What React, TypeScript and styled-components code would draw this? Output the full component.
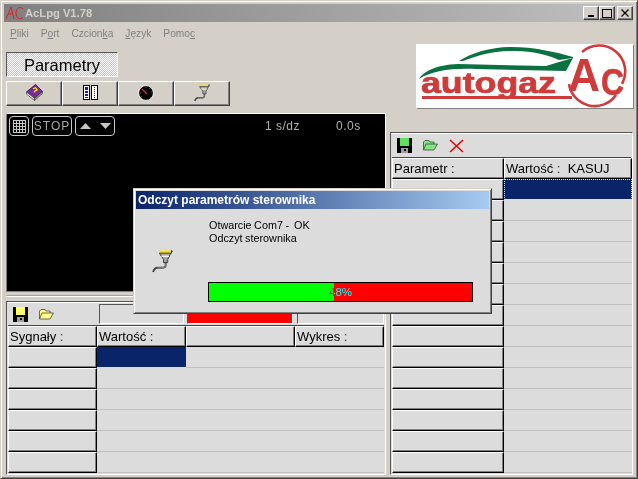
import React from 'react';
import styled, { createGlobalStyle } from 'styled-components';

const Global = createGlobalStyle`
  html, body { margin: 0; padding: 0; background: #d4d0c8; }
  body { font-family: "Liberation Sans", Arial, sans-serif; font-size: 11px; color: #000; overflow: hidden; }
`;

const Win = styled.div`
  position: relative;
  box-sizing: border-box;
  width: 638px;
  height: 479px;
  padding: 3px 4px 3px 3px;
  background: #d4d0c8;
  border: 1px solid;
  border-color: #d4d0c8 #404040 #404040 #d4d0c8;
  box-shadow: inset 1px 1px #fff, inset -1px -1px #808080;
  display: flex;
  flex-direction: column;
`;

const TitleBar = styled.div`
  height: 18px;
  flex: none;
  display: flex;
  align-items: center;
  padding-left: 2px;
  background: linear-gradient(90deg, #808080, #c0c0c0);
`;

const TitleText = styled.span`
  font: bold 11.2px "Liberation Sans", sans-serif;
  color: #d4d0c8;
  margin-left: 1px;
  flex: 1;
`;

const WinBtn = styled.button`
  box-sizing: border-box;
  width: 16px;
  height: 14px;
  padding: 0;
  margin: 0;
  background: #d4d0c8;
  border: 1px solid;
  border-color: #fff #404040 #404040 #fff;
  box-shadow: inset -1px -1px #808080;
  display: flex;
  align-items: center;
  justify-content: center;
  &.last { margin-left: 2px; }
`;

const MenuBar = styled.nav`
  height: 20px;
  flex: none;
  display: flex;
  align-items: center;
  padding: 1px 0 0 6px;
  gap: 12px;
  color: #808080;
  font-size: 10.2px;
  u { text-underline-offset: 1px; }
`;

const Main = styled.div`
  flex: 1;
  display: grid;
  grid-template-columns: 380px 243px;
  column-gap: 4px;
  padding-left: 2px;
  min-height: 0;
`;

const LeftCol = styled.div`
  display: flex;
  flex-direction: column;
  padding-top: 9px;
`;

const RightCol = styled.div`
  display: flex;
  flex-direction: column;
  padding-top: 1px;
`;

const TabBtn = styled.div`
  box-sizing: border-box;
  width: 112px;
  height: 25px;
  padding-top: 2px;
  display: flex;
  align-items: center;
  justify-content: center;
  font-size: 16.5px;
  border: 1px solid;
  border-color: #555 #fff #fff #555;
  background: repeating-conic-gradient(#c8c4bc 0 25%, #fff 0 50%) 0 0 / 2px 2px;
`;

const ToolRow = styled.div`
  display: flex;
  margin-top: 4px;
  height: 25px;
`;

const ToolBtn = styled.button`
  box-sizing: border-box;
  width: 56px;
  height: 25px;
  padding: 0 0 2px;
  background: #d4d0c8;
  border: 1px solid;
  border-color: #fff #404040 #404040 #fff;
  box-shadow: inset -1px -1px #808080;
  display: flex;
  align-items: center;
  justify-content: center;
`;

const Scope = styled.section`
  box-sizing: border-box;
  margin-top: 7px;
  width: 380px;
  height: 178px;
  background: #000;
  border-top: 1px solid #fff;
  border-right: 1px solid #fff;
  border-left: 1px solid #808080;
  display: flex;
  align-items: flex-start;
  padding: 2px 0 0 2px;
  color: #c8c8c8;
`;

const ScopeBtn = styled.div<{ $w: number; $ml?: number }>`
  box-sizing: border-box;
  width: ${p => p.$w}px;
  height: 20px;
  margin-left: ${p => p.$ml ?? 0}px;
  border: 1px solid #c8c8c8;
  border-radius: 4px;
  display: flex;
  align-items: center;
  justify-content: center;
  font-size: 12px;
  letter-spacing: 1px;
  color: #a8a8a8;
  gap: 9px;
`;

const ScopeReadout = styled.span<{ $ml: number }>`
  margin-left: ${p => p.$ml}px;
  margin-top: 3px;
  font-size: 12px;
  line-height: 15px;
  letter-spacing: 0.5px;
  color: #b0b0b0;
  white-space: nowrap;
`;

const Splitter = styled.div`
  height: 10px;
  flex: none;
  box-sizing: border-box;
  border-top: 1px solid #808080;
  background: linear-gradient(#d4d0c8 0 3px, #a8a49c 3px 4px, #fff 4px 5px, #d4d0c8 5px);
`;

const Panel = styled.section`
  box-sizing: border-box;
  flex: 1;
  display: flex;
  flex-direction: column;
  background: #dcdcdc;
  border: 1px solid;
  border-color: #555 #fff #fff #555;
  padding: 0 1px;
  min-height: 0;
`;

const PanelBar = styled.div<{ $h: number }>`
  box-sizing: border-box;
  flex: none;
  height: ${p => p.$h}px;
  display: flex;
  align-items: center;
  padding-left: 5px;
  gap: 11px;
  background: #dcdcdc;
  border-bottom: 1px solid #444;
  border-top: 1px solid #fff;
`;

const Field = styled.div<{ $w: number; $ml?: number; $red?: boolean }>`
  box-sizing: border-box;
  width: ${p => p.$w}px;
  height: 20px;
  margin-left: ${p => p.$ml ?? 0}px;
  border: 1px solid;
  border-color: #555 #fff #fff #555;
  background: ${p => (p.$red ? '#ff0000' : '#dcdcdc')};
`;

const Table = styled.div<{ $cols: string }>`
  display: grid;
  grid-template-columns: ${p => p.$cols};
  grid-auto-rows: 21px;
`;

const HeadCell = styled.div`
  box-sizing: border-box;
  display: flex;
  align-items: center;
  padding-left: 1px;
  font-size: 13px;
  white-space: nowrap;
  overflow: hidden;
  background: #dcdcdc;
  border-top: 1px solid #fff;
  border-left: 1px solid #fff;
  border-right: 1px solid #000;
  border-bottom: 1px solid #000;
  box-shadow: inset -1px -1px #808080;
`;

const FixedCell = styled.div`
  box-sizing: border-box;
  background: #dcdcdc;
  border-top: 1px solid #fff;
  border-left: 1px solid #fff;
  border-right: 1px solid #000;
  border-bottom: 1px solid #000;
  box-shadow: inset -1px -1px #808080;
`;

const DataCell = styled.div<{ $selected?: boolean; $dotted?: boolean }>`
  box-sizing: border-box;
  background: ${p => (p.$selected ? '#0a246a' : '#dcdcdc')};
  border-bottom: 1px solid ${p => (p.$selected ? '#dcdcdc' : '#c0c0c0')};
  outline: ${p => (p.$dotted ? '1px dotted #f0e8a0' : 'none')};
  outline-offset: -1px;
`;

const LogoBox = styled.div`
  box-sizing: border-box;
  width: 217px;
  height: 64px;
  margin-left: 26px;
  flex: none;
  background: #fff;
  box-shadow: 1px 1px 0 #808080;
`;

const RightPanel = styled(Panel)`
  margin-top: 24px;
`;

const Dialog = styled.div`
  position: absolute;
  left: 132px;
  top: 187px;
  box-sizing: border-box;
  width: 359px;
  height: 126px;
  padding: 2px;
  background: #dcdcdc;
  border: 1px solid;
  border-color: #d4d0c8 #404040 #404040 #d4d0c8;
  box-shadow: inset 1px 1px #fff, inset -1px -1px #808080;
  display: flex;
  flex-direction: column;
`;

const DialogTitle = styled.div`
  height: 18px;
  flex: none;
  display: flex;
  align-items: center;
  padding-left: 2px;
  font: bold 12px "Liberation Sans", sans-serif;
  color: #fff;
  background: linear-gradient(90deg, #0a246a, #a6caf0);
`;

const DialogBody = styled.div`
  flex: 1;
  display: grid;
  grid-template-columns: 72px 265px;
  grid-template-rows: auto 1fr;
  padding-top: 10px;
`;

const FunnelSlot = styled.div`
  grid-row: 1 / 3;
  padding: 31px 0 0 16px;
`;

const DialogText = styled.div`
  margin-left: 1px;
  font-size: 10.8px;
  line-height: 13px;
  word-spacing: -0.5px;
  color: #000;
`;

const Progress = styled.div`
  box-sizing: border-box;
  align-self: end;
  position: relative;
  width: 265px;
  height: 20px;
  margin-bottom: 9px;
  border: 1px solid #000;
  background: #ff0000;
`;

const ProgressFill = styled.div`
  height: 100%;
  background: #00ff00;
`;

const ProgressLabel = styled.span`
  position: absolute;
  inset: 0;
  display: flex;
  align-items: center;
  justify-content: center;
  font-size: 11.5px;
  color: #fff;
  mix-blend-mode: difference;
`;

const Funnel = ({ size }: { size: number }) => (
  <svg width={size} height={size + 2} viewBox="0 0 20 22">
    <rect x="7" y="0.5" width="11" height="2.5" fill="#ffe800" />
    <path d="M18 0l2 1-2 3z" fill="#333" />
    <path d="M7 3h11l-3 6v3h-4V9z" fill="#a8a8a8" stroke="#333" strokeWidth="0.9" />
    <path d="M9 6h7" stroke="#fff" strokeWidth="1.2" />
    <path d="M13 12v3c0 2-2 2-4 2H5c-2 0-3 1-4 4" fill="none" stroke="#444" strokeWidth="1.8" />
    <path d="M13 13v2c0 2-2 2-4 2H5" fill="none" stroke="#b0b0b0" strokeWidth="0.6" />
  </svg>
);

const Book = () => (
  <svg width="17" height="17" viewBox="0 0 16 16">
    <path d="M0.5 7.5 9 .5l6.5 6.5-7.5 6.5z" fill="#7a2aa0" stroke="#2a0c3c" strokeWidth="0.8" />
    <path d="M0.5 7.5 8 13.5v2L0.5 9.5z" fill="#f0f0f0" stroke="#333" strokeWidth="0.6" />
    <path d="M8 13.5l7.5-6.5v2L8 15.5z" fill="#9a9a9a" stroke="#333" strokeWidth="0.6" />
    <path d="M6.5 4.5l2.5-1 1.5 2-2.5 1.5v1" fill="none" stroke="#ffe800" strokeWidth="1.2" />
  </svg>
);

const Columns = () => (
  <svg width="15" height="15" viewBox="0 0 15 15" shapeRendering="crispEdges">
    <rect x="0.5" y="0.5" width="6" height="14" fill="#fff" stroke="#000" />
    <rect x="8.5" y="0.5" width="6" height="14" fill="#fff" stroke="#000" />
    <rect x="2" y="2" width="3" height="11" fill="#1818c0" />
    <path d="M2 5h3M2 8h3M2 11h3" stroke="#fff" />
    <path d="M11.5 2v11" stroke="#1818c0" strokeDasharray="1 1" />
  </svg>
);

const Gauge = () => (
  <svg width="16" height="16" viewBox="0 0 16 16">
    <circle cx="8" cy="8" r="7.4" fill="#000" stroke="#fff" strokeWidth="0.9" />
    <path d="M4 4l5 5" stroke="#e03030" strokeWidth="1.2" />
    <path d="M8 2v1M13 7h1M12 12l1 1M3 12l1-1M2 8h1M11 3l1 1" stroke="#c02020" strokeWidth="1" />
  </svg>
);

const Floppy = ({ color }: { color: string }) => (
  <svg width="15" height="15" viewBox="0 0 15 15" shapeRendering="crispEdges">
    <path d="M0 0h14l1 1v14H0z" fill="#000" />
    <rect x="3" y="0" width="9" height="8" fill={color} />
    <rect x="4" y="10" width="7" height="5" fill="#a0a0a0" />
    <rect x="7" y="11" width="2" height="2" fill="#000" />
  </svg>
);

const Folder = ({ color }: { color: string }) => (
  <svg width="15" height="11" viewBox="0 0 15 11">
    <path d="M0.5 10V2L2 .5h4L7 2h4v2" fill={color} stroke="#444" strokeWidth="0.8" />
    <path d="M0.5 10 3 4h11.5L11 10z" fill={color} stroke="#444" strokeWidth="0.8" />
  </svg>
);

const RedX = () => (
  <svg width="15" height="14" viewBox="0 0 15 14">
    <path d="M1 1l13 12M14 1 1 13" stroke="#f00000" strokeWidth="1.6" />
  </svg>
);

const GridIcon = () => (
  <svg width="13" height="13" viewBox="0 0 13 13" shapeRendering="crispEdges">
    <path d="M0 .5h13M0 3.5h13M0 6.5h13M0 9.5h13M0 12.5h13M.5 0v13M3.5 0v13M6.5 0v13M9.5 0v13M12.5 0v13" stroke="#c8c8c8" />
  </svg>
);

const Arrow = ({ down }: { down?: boolean }) => (
  <svg width="11" height="6" viewBox="0 0 11 6">
    <path d={down ? 'M0 0h11L5.5 6z' : 'M0 6h11L5.5 0z'} fill="#c8c8c8" />
  </svg>
);

const AppIcon = () => (
  <svg width="18" height="14" viewBox="0 0 18 14" style={{ flex: 'none' }}>
    <path d="M0 13 5 1l3 12M2 8h5" fill="none" stroke="#e02020" strokeWidth="1" />
    <path d="M17 3c-2-3-7-2-7 4s5 7 7 4" fill="none" stroke="#e02020" strokeWidth="1" />
  </svg>
);

const Logo = () => (
  <svg width="217" height="64" viewBox="0 0 217 64">
    <path
      d="M3 35C8 27 20 21 42 20L130 22 143 18 157 14 150 27 60 25C35 24 15 27 3 35z"
      fill="#0b7140"
    />
    <path
      d="M43 17C55 9 75 3 95 3 118 3 140 8 157 13L157 14 143 16C125 8 110 7 95 7 75 7 60 12 47 17z"
      fill="#0b7140"
    />
    <text
      x="5"
      y="49"
      fontFamily="Liberation Sans, sans-serif"
      fontWeight="700"
      fontSize="30"
      fill="#cf3a3a"
      stroke="#cf3a3a"
      strokeWidth="0.7"
      textLength="135"
      lengthAdjust="spacingAndGlyphs"
    >
      autogaz
    </text>
    <rect x="6" y="52" width="150" height="3" fill="#cf3a3a" />
    <path d="M166 8A26 26 0 0 1 206 40" fill="none" stroke="#cf3a3a" strokeWidth="2.6" />
    <path d="M153 40A26 26 0 0 0 200 51" fill="none" stroke="#cf3a3a" strokeWidth="2.6" />
    <text
      x="152"
      y="47"
      fontFamily="Liberation Sans, sans-serif"
      fontWeight="700"
      fontSize="46"
      fill="#cf3a3a"
      textLength="32"
      lengthAdjust="spacingAndGlyphs"
    >
      A
    </text>
    <text
      x="185"
      y="51"
      fontFamily="Liberation Sans, sans-serif"
      fontWeight="700"
      fontSize="37"
      fill="#cf3a3a"
      stroke="#cf3a3a"
      strokeWidth="0.6"
      textLength="23"
      lengthAdjust="spacingAndGlyphs"
    >
      C
    </text>
  </svg>
);

const leftRows = Array.from({ length: 6 }, (_, i) => i);
const rightRows = Array.from({ length: 14 }, (_, i) => i);
const progressPx = 125;

export default function App() {
  return (
    <>
      <Global />
      <Win>
        <TitleBar>
          <AppIcon />
          <TitleText>AcLpg V1.78</TitleText>
          <WinBtn>
            <svg width="8" height="8" viewBox="0 0 8 8" shapeRendering="crispEdges"><rect x="1" y="6" width="6" height="2" /></svg>
          </WinBtn>
          <WinBtn>
            <svg width="10" height="10" viewBox="0 0 10 10" shapeRendering="crispEdges"><path d="M.5 1.5h9v8h-9z" fill="none" stroke="#000" /><path d="M0 1.5h10" stroke="#000" /></svg>
          </WinBtn>
          <WinBtn className="last">
            <svg width="8" height="8" viewBox="0 0 8 8"><path d="M.5.5l7 7M7.5.5l-7 7" stroke="#000" strokeWidth="1.3" /></svg>
          </WinBtn>
        </TitleBar>
        <MenuBar>
          <span><u>P</u>liki</span>
          <span>P<u>o</u>rt</span>
          <span>Czcion<u>k</u>a</span>
          <span><u>J</u>ęzyk</span>
          <span>Pomo<u>c</u></span>
        </MenuBar>
        <Main>
          <LeftCol>
            <TabBtn>Parametry</TabBtn>
            <ToolRow>
              <ToolBtn><Book /></ToolBtn>
              <ToolBtn><Columns /></ToolBtn>
              <ToolBtn><Gauge /></ToolBtn>
              <ToolBtn><Funnel size={16} /></ToolBtn>
            </ToolRow>
            <Scope>
              <ScopeBtn $w={20}><GridIcon /></ScopeBtn>
              <ScopeBtn $w={40} $ml={3}>STOP</ScopeBtn>
              <ScopeBtn $w={40} $ml={3}><Arrow /><Arrow down /></ScopeBtn>
              <ScopeReadout $ml={150}>1 s/dz</ScopeReadout>
              <ScopeReadout $ml={36}>0.0s</ScopeReadout>
            </Scope>
            <Splitter />
            <Panel>
              <PanelBar $h={24}>
                <Floppy color="#ffff66" />
                <Folder color="#ffff88" />
                <Field $w={85} $ml={34} />
                <Field $w={106} $ml={-8} $red />
                <Field $w={87} $ml={-7} />
              </PanelBar>
              <Table $cols="89px 89px 109px 89px">
                <HeadCell>Sygnały :</HeadCell>
                <HeadCell>Wartość :</HeadCell>
                <HeadCell />
                <HeadCell>Wykres :</HeadCell>
                {leftRows.map(i => (
                  <React.Fragment key={i}>
                    <FixedCell />
                    <DataCell $selected={i === 0} />
                    <DataCell />
                    <DataCell />
                  </React.Fragment>
                ))}
              </Table>
            </Panel>
          </LeftCol>
          <RightCol>
            <LogoBox><Logo /></LogoBox>
            <RightPanel>
              <PanelBar $h={25}>
                <Floppy color="#60e060" />
                <Folder color="#80e880" />
                <RedX />
              </PanelBar>
              <Table $cols="112px 128px">
                <HeadCell>Parametr :</HeadCell>
                <HeadCell>Wartość :&nbsp;&nbsp;KASUJ</HeadCell>
                {rightRows.map(i => (
                  <React.Fragment key={i}>
                    <FixedCell />
                    <DataCell $selected={i === 0} $dotted={i === 0} />
                  </React.Fragment>
                ))}
              </Table>
            </RightPanel>
          </RightCol>
        </Main>
        <Dialog>
          <DialogTitle>Odczyt parametrów sterownika</DialogTitle>
          <DialogBody>
            <FunnelSlot><Funnel size={21} /></FunnelSlot>
            <DialogText>
              Otwarcie Com7 -&nbsp;&nbsp;OK<br />
              Odczyt sterownika
            </DialogText>
            <Progress>
              <ProgressFill style={{ width: progressPx }} />
              <ProgressLabel>48%</ProgressLabel>
            </Progress>
          </DialogBody>
        </Dialog>
      </Win>
    </>
  );
}
